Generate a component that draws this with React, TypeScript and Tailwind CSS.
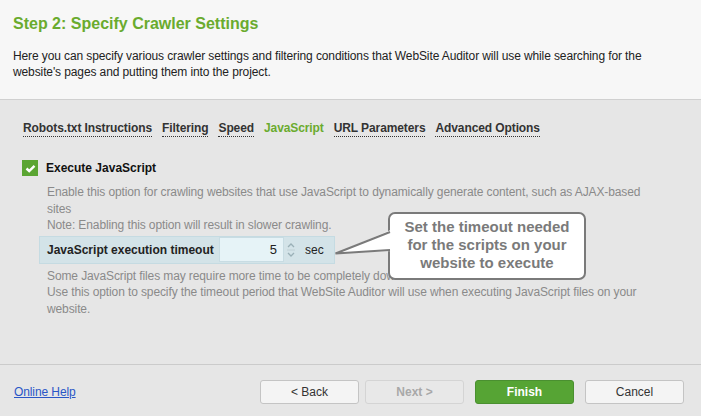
import React from 'react';

const TABS = ['Robots.txt Instructions', 'Filtering', 'Speed', 'JavaScript', 'URL Parameters', 'Advanced Options'];

const Button = ({ label, kind, className = '' }: { label: string; kind?: 'primary' | 'disabled'; className?: string }) => {
  const styles =
    kind === 'primary'
      ? 'bg-[#56a434] border-[#4a9030] text-white font-bold'
      : kind === 'disabled'
      ? 'bg-[#e8e8e8] border-[#d4d4d4] text-[#a8a8a8] font-bold'
      : 'bg-[#f4f4f4] border-[#c4c4c4] text-[#333]';
  return (
    <button className={`w-[99px] h-[24px] rounded-[3px] border text-[12px] ${styles} ${className}`}>{label}</button>
  );
};

export default function App() {
  return (
    <div className="w-[701px] h-[416px] flex flex-col bg-[#e6e6e6] font-['Liberation_Sans',Arial,sans-serif] text-[12px] overflow-hidden">
      <div className="h-[100px] shrink-0 bg-[#f7f7f7] border-b border-[#d0d0d0] px-[13px] pt-[12px]">
        <h1 className="text-[16px] font-bold text-[#6aab2e] leading-[24px]">Step 2: Specify Crawler Settings</h1>
        <p className="mt-[12px] text-[#222] leading-[16px] tracking-[-0.11px]">
          Here you can specify various crawler settings and filtering conditions that WebSite Auditor will use while searching for the
          website's pages and putting them into the project.
        </p>
      </div>

      <div className="flex-1 relative px-[23px] pt-[21px]">
        <div className="flex gap-[10px] tracking-[-0.1px]">
          {TABS.map((t) => (
            <span
              key={t}
              className={`font-bold leading-[15px] border-b border-dotted ${t === 'JavaScript' ? 'text-[#6aab2e] border-transparent' : 'text-[#333] border-[#333]'}`}
            >
              {t}
            </span>
          ))}
        </div>

        <div className="mt-[22px] flex items-center gap-[8px] -ml-[1px]">
          <span className="w-[16px] h-[16px] bg-[#5aa532] flex items-center justify-center">
            <svg width="11" height="9" viewBox="0 0 11 9">
              <path d="M1.5 4.5 L4.2 7 L9.5 1.8" stroke="white" strokeWidth="2.4" fill="none" />
            </svg>
          </span>
          <span className="font-bold text-[#111]">Execute JavaScript</span>
        </div>

        <div className="ml-[24px] mt-[7px] text-[#8a8a8a] leading-[16.5px] tracking-[-0.11px]">
          <p>
            Enable this option for crawling websites that use JavaScript to dynamically generate content, such as AJAX-based
            <br />
            sites
          </p>
          <p>Note: Enabling this option will result in slower crawling.</p>
        </div>

        <div className="ml-[16px] mt-[2px] w-[296px] h-[28px] bg-[#d3e3e8] border border-[#c5dbe2] flex items-center pl-[7px]">
          <span className="font-bold text-[#222] w-[172px]">JavaScript execution timeout</span>
          <div className="h-[25px] w-[65px] bg-[#e6f3f7] border border-[#c8dce3] flex items-center justify-end pr-[6px] text-[13px] text-[#222]">5</div>
          <div className="h-[25px] w-[14px] flex flex-col items-center justify-center">
            <svg width="10" height="20" viewBox="0 0 10 20">
              <path d="M2 7 L5 4 L8 7" stroke="#9ab0b7" strokeWidth="1.3" fill="none" />
              <path d="M1 10 H9" stroke="#c0d0d5" strokeWidth="1" />
              <path d="M2 13 L5 16 L8 13" stroke="#9ab0b7" strokeWidth="1.3" fill="none" />
            </svg>
          </div>
          <span className="ml-[7px] text-[#222]">sec</span>
        </div>

        <div className="ml-[24px] mt-[4px] text-[#8a8a8a] leading-[16.5px] tracking-[-0.11px]">
          <p>Some JavaScript files may require more time to be completely downloaded and executed.</p>
          <p>Use this option to specify the timeout period that WebSite Auditor will use when executing JavaScript files on your website.</p>
        </div>

        {/* callout */}
        <div className="absolute z-10 left-[334px] top-[112px]">
          <div className="ml-[54px] w-[198px] h-[68px] pb-[2px] bg-white border-2 border-[#7a7a7a] rounded-[7px] flex flex-col items-center justify-center text-[15px] font-bold text-[#7a7a7a] leading-[18px] text-center">
            <span>Set the timeout needed</span>
            <span>for the scripts on your</span>
            <span>website to execute</span>
          </div>
          <svg width="60" height="66" viewBox="0 0 60 66" className="absolute left-0 top-0">
            <path d="M59 17 L1.5 41.5 L59 39 Z" fill="white" />
            <path d="M56 20 L1.5 41.5 L56 38" stroke="#7a7a7a" strokeWidth="2" fill="none" strokeLinejoin="miter" />
          </svg>
        </div>
      </div>

      <div className="h-[52px] shrink-0 border-t border-[#cbcbcb] flex items-center px-[14px] pt-[3px]">
        <a className="text-[#2a56c6] underline tracking-[-0.1px]">Online Help</a>
        <div className="ml-auto flex mr-[3px]">
          <Button label="< Back" />
          <Button label="Next >" kind="disabled" className="ml-[6px]" />
          <Button label="Finish" kind="primary" className="ml-[11px]" />
          <Button label="Cancel" className="ml-[11px]" />
        </div>
      </div>
    </div>
  );
}
